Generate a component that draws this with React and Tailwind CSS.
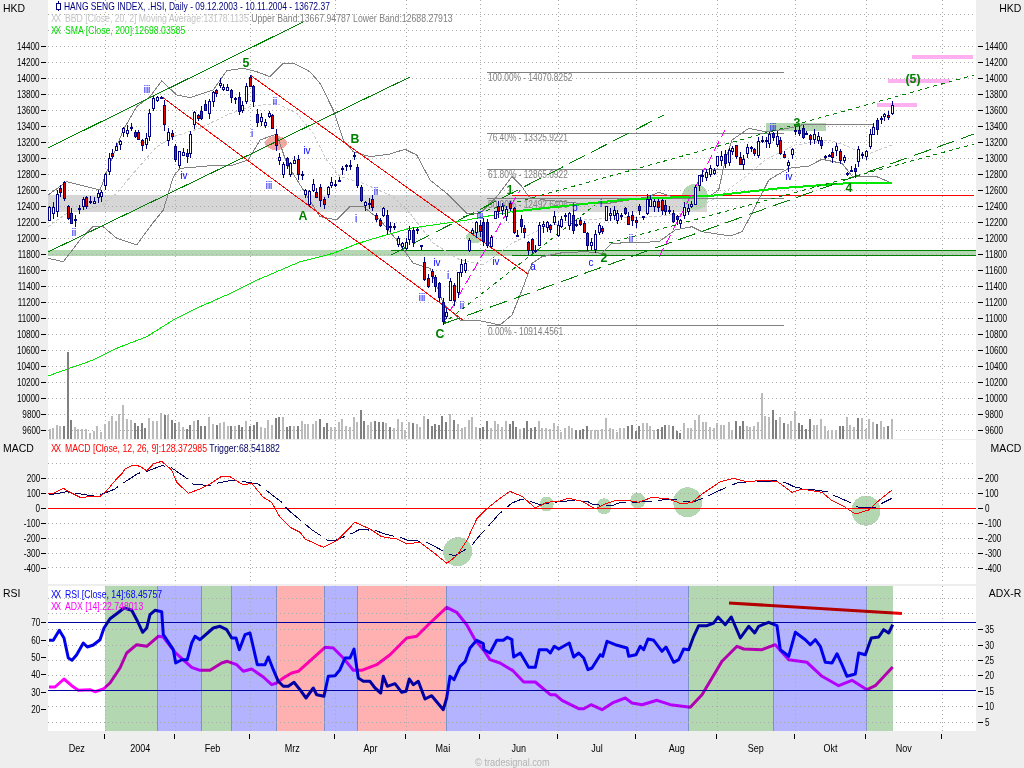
const C1 = [[148,622,660,0],[160,622,640,0],[172,583,635,0],[181,565,578,1],[193,548,595,1],[205,618,655,1],[214,640,670,1],[226,658,662,0],[238,625,628,0],[250,597,618,0],[259,592,618,1],[270,603,606,0],[283,604,610,0],[293,580,592,0],[304,577,590,0],[316,522,557,0],[328,475,515,0],[337,460,470,1],[349,438,450,0],[361,425,432,0],[370,385,397,0],[382,390,400,0],[394,382,385,0],[406,398,408,1],[415,397,418,1],[427,420,436,1],[439,415,432,0],[448,340,410,0],[460,296,325,0],[472,293,300,0],[484,292,293,0],[493,315,374,1],[505,396,422,0],[517,400,408,1],[526,438,478,1],[538,455,497,0],[550,458,465,0],[562,460,470,1],[571,402,460,0],[583,338,374,0],[595,345,355,1],[604,333,355,1],[616,313,330,1],[628,305,340,0],[640,278,305,0],[649,270,280,1],[661,250,255,0],[670,263,268,0],[682,262,270,0],[694,272,292,1],[706,295,297,0],[718,292,333,1],[727,316,330,0],[739,258,305,0],[751,232,258,1],[760,258,303,1],[772,342,367,1],[782,352,365,0],[796,367,375,0],[806,340,348,0],[817,346,385,1],[829,403,435,1],[838,472,480,0],[850,494,523,0],[862,476,497,1],[871,490,524,0],[883,482,490,0],[895,478,522,1],[907,522,524,0],[916,572,583,0],[928,573,612,0],[940,553,570,0],[949,576,592,1],[961,562,602,1],[973,597,612,1],[985,562,583,0],[994,547,555,0],[1006,553,555,0],[1018,541,543,0],[1027,505,507,0],[1039,495,497,0],[1051,495,497,0],[1063,467,470,0],[1072,502,557,1],[1084,562,602,1],[1096,607,615,0],[1108,610,611,0],[1117,597,622,1],[1129,647,658,1],[1141,660,675,1],[1150,625,647,0],[1162,645,687,1],[1171,678,681,1],[1183,678,679,0],[1195,715,733,0],[1207,730,740,0],[1219,728,746,0],[1228,690,718,0],[1240,690,727,1],[1252,688,690,0],[1264,737,740,0],[1273,787,838,1],[1285,835,860,1],[1297,815,830,1],[1306,832,860,1],[1318,850,893,1],[1330,908,965,1],[1339,937,950,0],[1351,843,900,0],[1363,855,900,1],[1375,818,878,0],[1384,792,818,0],[1396,790,810,0],[1408,722,750,0],[1417,690,700,0],[1429,667,697,0],[1441,675,695,1],[1450,667,725,1],[1462,667,735,1],[1474,712,738,0],[1486,635,655,0],[1495,618,635,1],[1507,620,630,0],[1519,627,650,0],[1531,610,625,1]];
const C2 = [[5,625,697,1],[16,705,706,0],[28,657,680,1],[37,685,698,1],[49,728,752,1],[61,718,750,1],[70,750,752,0],[82,677,735,0],[94,672,680,0],[106,668,682,0],[115,676,688,1],[127,648,667,0],[139,675,705,0],[148,657,680,0],[160,645,646,0],[172,640,675,0],[184,645,690,1],[193,672,673,0],[205,660,672,1],[217,670,697,1],[226,700,735,1],[238,728,735,0],[250,703,748,0],[262,677,697,0],[271,685,695,1],[283,620,660,0],[295,640,645,0],[307,630,645,0],[316,640,660,0],[328,645,650,0],[340,625,640,1],[349,650,672,1],[361,645,660,1],[373,660,668,1],[382,618,632,1],[394,650,651,0],[406,597,640,0],[415,598,618,0],[427,605,618,0],[439,603,622,1],[451,600,632,1],[460,615,635,1],[472,630,635,0],[484,640,665,1],[496,650,657,1],[505,660,670,0],[517,622,645,0],[529,625,635,0],[538,613,618,0],[550,562,612,0],[562,527,555,0],[571,525,530,0],[583,518,532,0],[595,505,522,0],[607,510,520,0],[616,470,497,0],[628,468,480,0],[640,462,490,1],[652,452,487,0],[661,445,455,0],[673,437,470,1],[685,472,492,1],[694,477,493,0],[706,442,460,0],[718,443,444,0],[727,447,460,1],[739,425,467,0],[751,420,425,0],[763,420,425,0],[772,402,430,0],[784,400,412,1],[796,408,432,0],[805,422,460,1],[817,462,472,1],[829,487,497,0],[841,447,463,0],[850,392,393,0],[862,390,400,1],[874,385,412,1],[883,400,401,0],[895,405,418,1],[907,402,418,0],[919,408,420,0],[928,420,437,1],[940,470,471,0],[952,465,466,0],[961,458,472,1],[973,440,452,0],[985,455,480,1],[997,472,480,0],[1006,520,521,0],[1018,512,513,0],[1030,504,515,1],[1039,447,485,0],[1051,463,464,0],[1063,453,470,0],[1075,403,440,0],[1084,382,402,0],[1096,362,388,1],[1108,355,356,0],[1117,343,350,0],[1129,347,352,1],[1141,316,340,0]];
const candles = [...C1.map(([x,t,b,r])=>[Math.round(x/3)+.5,t/3,b/3,r]), ...C2.map(([x,t,b,r])=>[Math.round(512+x/3)+.5,t/3,b/3,r])];
const V1 = [147,135,157,132,168,124,178,127,188,127,200,-96,210,108,221,130,232,135,243,135,254,135,266,148,278,140,289,127,300,145,312,120,323,112,333,97,344,112,354,90,365,63,378,105,390,108,402,118,410,125,423,118,433,132,445,103,456,110,467,110,480,87,492,92,501,92,513,108,522,118,534,114,546,130,558,135,568,124,580,110,591,108,600,125,612,125,623,98,635,120,647,122,657,118,668,113,680,125,690,125,702,126,714,124,724,130,736,112,747,125,759,122,769,115,780,130,792,132,802,107,813,122,824,103,835,98,846,99,858,130,868,125,878,125,890,125,902,112,912,120,922,120,936,120,945,110,957,105,968,130,979,118,990,130,1002,130,1014,113,1022,106,1034,126,1046,130,1058,100,1067,113,1080,78,1090,112,1102,122,1111,115,1122,112,1134,113,1146,115,1156,116,1168,130,1180,132,1192,105,1204,113,1213,138,1224,113,1235,118,1247,120,1258,128,1270,97,1282,106,1292,127,1302,120,1314,122,1324,97,1335,115,1346,90,1358,108,1370,120,1382,132,1392,130,1404,108,1414,100,1425,130,1437,132,1447,130,1459,112,1470,132,1482,112,1492,120,1504,128,1514,112,1526,120];
const V2 = [0,112,10,130,20,135,32,132,43,110,55,132,66,128,77,110,88,133,100,132,111,136,123,117,135,127,143,145,155,132,167,127,178,133,190,137,200,138,211,135,223,127,233,138,245,138,256,138,267,135,278,102,290,133,300,135,312,143,322,133,333,132,345,127,357,123,368,140,378,127,390,118,402,118,412,127,424,138,435,135,447,128,456,123,468,123,480,125,491,142,500,147,512,118,524,133,534,133,546,108,557,92,569,113,579,113,590,130,602,133,612,118,623,122,634,122,647,115,657,138,669,110,680,125,690,112,701,125,712,130,723,127,735,115,746,27,757,95,768,100,780,78,790,108,800,100,812,118,824,120,835,110,846,82,857,118,868,124,880,135,890,105,902,123,913,123,924,106,935,127,946,140,957,138,968,137,980,127,990,125,1002,100,1012,123,1024,130,1034,102,1046,102,1058,135,1069,105,1080,113,1092,120,1103,112,1114,128,1125,127,1136,106];
const vols = [];
const addV = (a, ox) => { for (let i = 0; i < a.length; i += 2) { const x = Math.round(ox + a[i] / 3); let best = candles[0]; for (const c of candles) if (Math.abs(c[0] - x) < Math.abs(best[0] - x)) best = c; vols.push([x, 384 + a[i + 1] / 3, best[3]]); } };
addV(V1, 0); addV(V2, 512);
const pts = (a, ox = 0, oy = 0) => { let s = []; for (let i = 0; i < a.length; i += 2) s.push(`${(ox + a[i] / 3).toFixed(1)},${(oy + a[i + 1] / 3).toFixed(1)}`); return s.join(' '); };
const both = (a, b, oy = 0) => pts(a, 0, oy) + ' ' + pts(b, 512, oy);

const SMA = pts([144,1128,200,1108,280,1080,350,1045,440,1010,520,960,600,920,680,885,760,845,830,815,900,785,960,770,1000,760,1075,730,1140,710,1230,685,1320,672,1400,660,1536,635]);
const SMA2 = pts([0,635,120,622,350,598,590,588,620,585,800,565,1000,550,1140,550], 512);
const UP = both([144,585,200,545,260,560,300,570,330,490,370,390,410,320,450,290,485,243,530,285,570,293,640,270,680,212,730,205,770,215,810,230,850,190,880,190,930,215,960,250,1000,330,1030,420,1060,455,1110,470,1170,462,1215,448,1250,465,1290,540,1340,580,1400,640,1440,640,1490,590,1536,530],[30,560,50,590,100,600,200,610,290,610,410,590,440,577,480,590,590,590,620,570,640,480,660,420,710,385,760,395,800,390,850,380,880,372,1085,372]);
const LOW = both([144,775,190,785,240,720,280,678,310,680,350,715,410,735,450,680,490,630,520,530,540,505,600,500,650,495,700,495,745,480,780,420,830,402,860,490,910,570,960,650,1010,660,1050,620,1090,620,1140,660,1190,720,1240,790,1290,805,1330,910,1380,960,1430,960,1500,975,1536,945],[30,870,60,790,90,770,150,758,220,755,270,760,300,730,440,725,490,690,540,680,570,695,655,708,690,695,720,640,740,600,770,540,830,505,890,498,930,478,990,490,1020,528,1090,528,1140,550]);
const MID = both([144,680,200,640,300,620,350,580,400,520,470,440,520,410,600,385,680,345,750,320,830,310,890,340,940,400,980,480,1020,530,1090,550,1180,590,1230,640,1300,730,1380,780,1450,795,1536,730],[100,680,200,660,300,655,430,650,520,640,620,590,700,530,760,480,850,435,950,420,1010,440,1060,465,1140,435]);
const MACD = both([144,328,160,328,190,313,210,325,240,340,300,337,320,320,345,290,365,270,375,255,400,243,420,247,440,260,460,240,485,232,515,258,530,295,565,328,600,315,630,300,665,277,690,278,730,303,755,298,790,340,815,355,840,400,870,430,900,445,915,465,970,490,1010,470,1065,415,1110,435,1145,458,1190,465,1220,480,1260,475,1300,505,1340,538,1370,515,1400,470,1430,405,1460,375,1490,350,1530,322],[0,325,30,337,70,372,105,355,140,352,170,343,210,352,250,375,280,360,310,350,340,348,380,355,420,340,470,345,510,360,540,355,570,330,600,310,625,293,665,283,700,292,760,290,795,292,840,325,870,315,930,325,960,350,1000,370,1030,390,1070,378,1100,350,1140,318],384);
const TRIG = both([147,333,200,323,260,333,300,333,345,315,365,300,415,268,440,262,485,245,510,248,560,283,580,300,630,305,655,297,700,288,775,300,795,316,845,355,865,378,915,420,935,437,985,470,1005,470,1058,447,1080,436,1130,440,1150,449,1205,462,1222,468,1275,473,1295,482,1345,510,1365,515,1415,485,1432,463,1478,412,1495,392,1536,357],[30,345,85,362,105,358,150,352,180,350,225,352,245,362,300,365,320,357,400,353,480,345,515,352,540,355,585,338,610,325,660,303,680,295,800,290,825,298,850,310,945,323,968,335,1020,358,1040,370,1090,372,1110,358,1140,343],384);
const RSI = both([147,772,160,772,178,742,192,765,205,825,216,832,230,815,250,780,262,792,280,786,300,770,312,735,330,707,350,692,372,675,395,682,410,710,428,748,440,735,450,695,465,682,485,686,490,755,520,800,527,840,545,830,562,830,575,780,585,760,600,770,640,735,660,730,680,740,695,765,708,765,718,800,735,755,750,750,772,845,795,845,805,822,820,860,835,895,850,910,865,910,882,898,900,920,918,945,940,915,950,935,972,940,985,880,1005,878,1020,860,1035,825,1050,825,1062,798,1075,885,1090,895,1110,895,1125,915,1142,930,1150,880,1162,910,1185,902,1205,928,1218,925,1228,888,1240,905,1255,895,1275,948,1295,938,1330,980,1340,945,1350,880,1362,890,1380,850,1396,835,1410,795,1430,772,1450,782,1452,800,1470,810,1490,772,1510,772,1522,763,1536,770],[0,780,5,822,25,810,50,853,70,853,82,800,105,800,115,810,127,790,140,798,172,780,185,822,200,810,215,825,228,860,240,855,265,815,272,820,285,775,310,785,345,795,350,820,372,815,385,790,395,800,408,768,425,772,450,805,462,792,485,838,500,830,515,798,530,800,545,760,560,728,585,728,605,720,618,702,640,725,658,702,685,765,710,730,728,750,740,730,770,718,795,728,805,800,830,820,850,748,880,770,895,785,910,770,925,790,940,838,960,840,975,812,990,845,1005,880,1030,873,1040,810,1060,815,1078,765,1100,762,1115,740,1130,750,1142,725],384);
const ADX = both([147,912,165,912,192,888,215,908,235,922,270,920,285,926,310,918,330,900,360,855,380,810,410,785,440,790,475,760,490,762,525,808,575,853,600,862,630,862,665,840,682,835,710,845,730,865,755,858,790,882,815,905,830,900,850,885,875,870,895,865,975,793,1000,795,1030,825,1060,862,1085,862,1130,845,1170,815,1220,765,1250,760,1290,720,1340,673,1370,688,1400,725,1425,770,1450,800,1470,830,1500,840,1536,862],[0,860,35,897,70,897,115,935,130,935,150,952,200,977,215,977,237,965,270,980,305,958,340,945,360,960,390,965,435,952,475,965,535,973,570,935,600,885,630,835,675,790,695,798,750,800,790,785,830,830,885,838,930,880,980,908,1020,892,1065,920,1090,908,1142,852],384);

const VX = [105.5,175.5,250.5,335.5,406.5,480.5,558.5,636.5,717.5,795.5,866.5,942.5];
const MONTHS = [['Dez','w-[57px]'],['2004','w-[70px]'],['Feb','w-[75px]'],['Mrz','w-[85px]'],['Apr','w-[71px]'],['Mai','w-[74px]'],['Jun','w-[78px]'],['Jul','w-[78px]'],['Aug','w-[81px]'],['Sep','w-[78px]'],['Okt','w-[71px]'],['Nov','w-[76px]']];
const BANDS = [[105,157,'#b3d7b0'],[157,201.7,'#b3b3ff'],[201.7,231.7,'#b3d7b0'],[231.7,276.7,'#b3b3ff'],[276.7,324.3,'#ffb0b0'],[324.3,357.7,'#b3b3ff'],[357.7,446.3,'#ffb0b0'],[446.3,688.7,'#b3b3ff'],[688.7,773.3,'#b3d7b0'],[773.3,866.3,'#b3b3ff'],[866.3,893,'#b3d7b0']];
const WAVE = [['5',246,67],['B',355,143],['A',303,220],['C',440,338],['1',510,194],['2',604,262],['3',797,127],['4',849,192],['(5)',913,83]];
const SUB = [['iii',147,93],['ii',74,236],['iv',184,179],['ii',275,105],['i',252,137],['iii',269,189],['iv',307,154],['ii',376,195],['i',356,222],['iv',437,266],['i',448,279],['iii',422,301],['ii',462,309],['iii',480,219],['iv',496,265],['a',533,270],['c',591,266],['b',575,211],['i',601,207],['ii',631,242],['iii',773,131],['iv',789,180]];
const FIB = [[72,'100.00% - 14070.8252',81],[133,'76.40% - 13325.9221',141],[169,'61.80% - 12865.0922',178],[198.5,'50.00% - 12492.6406',208],[325.5,'0.00% - 10914.4561',335]];

const T = ({ x, y, s = 0.75, anchor = 'middle', children, ...p }) => (
  <text transform={`translate(${x} ${y}) scale(${s} 1)`} textAnchor={anchor} {...p}>{children}</text>
);
const Dots = ({ ys, y1, y2 }) => (
  <g stroke="#aaaaaa" strokeDasharray="1 3">
    {ys.map(y => <line key={y} x1="48" x2="976" y1={y} y2={y} />)}
    {VX.map(x => <line key={x} x1={x} x2={x} y1={y1} y2={y2} />)}
  </g>
);
const Line = ({ a, b, c, d, ...p }) => <line x1={a} y1={b} x2={c} y2={d} {...p} />;

function LeftAxis({ labels, pad, row, title, titleTop }) {
  return (
    <div className="relative w-12 shrink-0 bg-[#eeeeee]" >
      <div className={titleTop + ' absolute left-[3px] text-[11px] leading-none scale-x-[.95] origin-left'}>{title}</div>
      <div className={pad + ' flex flex-col'}>
        {labels.map(l => (
          <div key={l} className={row + ' flex items-center justify-end'}>
            <span className="text-[11px] leading-none scale-x-[.74] origin-right">{l}</span>
            <span className="ml-[1px] mr-[2px] h-px w-[5px] bg-black" />
          </div>
        ))}
      </div>
    </div>
  );
}
function RightAxis({ labels, pad, row, title, titleTop }) {
  return (
    <div className="relative w-12 shrink-0 bg-[#eeeeee]">
      <div className={titleTop + ' absolute right-[3px] text-[11px] leading-none scale-x-[.95] origin-right'}>{title}</div>
      <div className={pad + ' flex flex-col'}>
        {labels.map(l => (
          <div key={l} className={row + ' flex items-center'}>
            <span className="ml-[2px] mr-[2px] h-px w-[5px] bg-black" />
            <span className="text-[11px] leading-none scale-x-[.74] origin-left">{l}</span>
          </div>
        ))}
      </div>
    </div>
  );
}
const Xs = () => <span className="tracking-[-2px] mr-[7px]">XX</span>;

function Main() {
  const prices = [14400,14200,14000,13800,13600,13400,13200,13000,12800,12600,12400,12200,12000,11800,11600,11400,11200,11000,10800,10600,10400,10200,10000,9800,9600];
  const gy = [14.5,30.5,...prices.map((_, i) => 46.5 + i * 16)];
  return (
    <div className="flex h-[439px]">
      <LeftAxis labels={prices} pad="pt-[38px]" row="h-4" title="HKD" titleTop="top-[3px]" />
      <div className="relative w-[928px] bg-white">
        <svg viewBox="48 0 928 439" className="block h-[439px] w-[928px]" shapeRendering="crispEdges">
          <rect x="48" y="195" width="659" height="17" fill="#d6d6d6" />
          <rect x="48" y="250" width="928" height="6" fill="#b3d7b0" />
          <rect x="766" y="123" width="60" height="8" fill="#b3d7b0" />
          <ellipse cx="695" cy="197" rx="13" ry="13" fill="#b3d7b0" />
          <ellipse cx="475" cy="237" rx="9" ry="6" fill="#b3d7b0" />
          <ellipse cx="276" cy="143" rx="11" ry="7" fill="#f5a8a0" />
          <Dots ys={gy} y1="0" y2="439" />
          <rect x="912" y="55" width="61" height="4" fill="#ffb0f0" />
          <rect x="888" y="79" width="62" height="4" fill="#ffb0f0" />
          <rect x="877" y="103" width="40" height="4" fill="#ffb0f0" />
          {FIB.map(([y, t, ty]) => (
            <g key={y}>
              <Line a="487" b={y} c="784" d={y} stroke="#808080" />
              <T x="488" y={ty} anchor="start" fontSize="11" fill="#808080" s="0.76">{t}</T>
            </g>
          ))}
          <Line a="391" b="250.5" c="976" d="250.5" stroke="#008000" strokeWidth="1" />
          <Line a="512" b="255.5" c="976" d="255.5" stroke="#008000" />
          <Line a="512" b="195.5" c="974" d="195.5" stroke="#ff0000" />
          <polyline points={MID} fill="none" stroke="#c8c8c8" strokeDasharray="3 2" />
          <polyline points={UP} fill="none" stroke="#808080" />
          <polyline points={LOW} fill="none" stroke="#808080" />
          <polyline points={SMA} fill="none" stroke="#00e800" />
          <polyline points={SMA2} fill="none" stroke="#00e800" strokeWidth="2" />
          <g stroke="#008000" fill="none">
            <Line a="48" b="148" c="303" d="22" />
            <Line a="48" b="252" c="410" d="77" />
            <Line a="443" b="324" c="974" d="134" strokeDasharray="18 7" />
            <Line a="391" b="255" c="664" d="115" strokeDasharray="18 7" />
            <Line a="463" b="217" c="974" d="75" strokeDasharray="4 4" />
            <Line a="609" b="243" c="974" d="144" strokeDasharray="4 4" />
            <Line a="443" b="324" c="595" d="205" strokeDasharray="4 4" />
          </g>
          <g stroke="#ff0000" fill="none">
            <Line a="250" b="75" c="528" d="274" />
            <Line a="162" b="97" c="463" d="320" />
          </g>
          <g stroke="#ff00ff" fill="none" strokeDasharray="10 5">
            <Line a="443" b="323" c="520" d="190" />
            <Line a="659" b="257" c="725" d="130" />
          </g>
          {vols.map(([x, top, r], i) => (
            <rect key={i} x={x} y={top} width="2" height={439 - top} fill={r ? '#808080' : '#bbbbbb'} />
          ))}
          {candles.map(([x, t, b, r], i) => {
            const wt = 1 + (i * 7919) % 5, wb = 1 + (i * 104729) % 6;
            return (
              <g key={i}>
                <line x1={x} x2={x} y1={t - wt} y2={b + wb} stroke="#000080" />
                <rect x={x - 1} y={t} width="2" height={Math.max(b - t, 1)} fill={r ? '#e00000' : '#ffffff'} stroke="#000080" />
              </g>
            );
          })}
          {WAVE.map(([t, x, y]) => <T key={t} x={x} y={y} fontSize="13" fontWeight="700" fill="#008000" s="0.95">{t}</T>)}
          {SUB.map(([t, x, y], i) => <T key={i} x={x} y={y} fontSize="11" fill="#0000ff" s="0.9">{t}</T>)}
        </svg>
        <div className="absolute left-[3px] top-0 text-[11px] leading-[12px]">
          <div className="flex h-3 items-center text-[#000080]">
            <svg width="14" height="10" className="shrink-0" shapeRendering="crispEdges"><line x1="7" x2="7" y1="0" y2="10" stroke="#000080" /><rect x="5" y="2" width="4" height="6" fill="#fff" stroke="#000080" /></svg>
            <span className="ml-[-1px] whitespace-nowrap scale-x-[.77] origin-left">HANG SENG INDEX, .HSI, Daily - 09.12.2003 - 10.11.2004 - 13672.37</span>
          </div>
          <div className="h-3 whitespace-nowrap scale-x-[.79] origin-left text-[#c4c4c4]"><Xs />BBD [Close, 20, 2] Moving Average:13178.1135 <span className="text-[#808080]">Upper Band:13667.94787 Lower Band:12688.27913</span></div>
          <div className="h-3 whitespace-nowrap scale-x-[.79] origin-left text-[#00e000]"><Xs />SMA [Close, 200]:12698.03585</div>
        </div>
      </div>
      <RightAxis labels={prices} pad="pt-[38px]" row="h-4" title="HKD" titleTop="top-[3px]" />
    </div>
  );
}

function MacdPanel() {
  const lab = [200,100,0,-100,-200,-300,-400];
  return (
    <div className="flex h-[144px]">
      <LeftAxis labels={lab} pad="pt-[31px]" row="h-[15px]" title="MACD" titleTop="top-[3px]" />
      <div className="relative w-[928px] bg-white">
        <svg viewBox="48 440 928 144" className="block h-[144px] w-[928px]" shapeRendering="crispEdges">
          {[[457.7,551.7,14.5,14.5],[546.7,504,7,7.5],[604,506.3,7.5,8],[637.7,500.7,7.5,8],[687.7,502.3,14.5,15],[866,510.7,14.5,15]].map(([x, y, a, b]) => (
            <ellipse key={x} cx={x} cy={y} rx={a} ry={b} fill="#b3d7b0" />
          ))}
          <Dots ys={[463.5,478.5,493.5,523.5,538.5,553.5,567.5]} y1="440" y2="584" />
          <Line a="48" b="508.5" c="976" d="508.5" stroke="#ff0000" strokeWidth="1" />
          <polyline points={TRIG} fill="none" stroke="#000060" strokeDasharray="20 6" />
          <polyline points={MACD} fill="none" stroke="#ff0000" />
        </svg>
        <div className="absolute left-[3px] top-[2px] whitespace-nowrap text-[11px] leading-[12px] scale-x-[.79] origin-left text-[#ff0000]"><Xs />MACD [Close, 12, 26, 9]:128.372985 <span className="text-[#000060]">Trigger:68.541882</span></div>
      </div>
      <RightAxis labels={lab} pad="pt-[31px]" row="h-[15px]" title="MACD" titleTop="top-[3px]" />
    </div>
  );
}

function RsiPanel() {
  return (
    <div className="flex h-[145px]">
      <LeftAxis labels={[70,60,50,40,30,20]} pad="pt-[28px]" row="h-[17.4px]" title="RSI" titleTop="top-[2px]" />
      <div className="relative w-[928px] bg-white">
        <svg viewBox="48 587 928 145" className="block h-[145px] w-[928px]" shapeRendering="crispEdges">
          {BANDS.map(([a, b, c]) => <rect key={a} x={a} y="587" width={b - a} height="145" fill={c} />)}
          {BANDS.slice(0, -1).map(([a, b]) => <line key={a} x1={Math.floor(b) + .5} x2={Math.floor(b) + .5} y1="587" y2="732" stroke="#8090c8" />)}
          <Dots ys={[599.5,614.5,630.5,646.5,661.5,676.5,707.5,723.5]} y1="587" y2="732" />
          <g stroke="#0000a0">
            <Line a="48" b="623.5" c="976" d="623.5" />
            <Line a="48" b="691.5" c="976" d="691.5" />
          </g>
          <g fill="none" strokeWidth="3" className="mix-blend-multiply" strokeLinejoin="round" shapeRendering="geometricPrecision">
            <polyline points={RSI} stroke="#0000ee" className="mix-blend-multiply" />
            <polyline points={ADX} stroke="#ff00ff" className="mix-blend-multiply" />
            <Line a="729" b="604" c="902" d="614.5" stroke="#ff0000" className="mix-blend-multiply" />
          </g>
        </svg>
        <div className="absolute left-[3px] top-[2px] whitespace-nowrap text-[11px] leading-[12px] scale-x-[.79] origin-left">
          <div className="text-[#0000ff]"><Xs />RSI [Close, 14]:68.45757</div>
          <div className="text-[#ff00ff]"><Xs />ADX [14]:22.748013</div>
        </div>
      </div>
      <RightAxis labels={[35,30,25,20,15,10,5]} pad="pt-[36px]" row="h-[15.4px]" title="ADX-R" titleTop="top-[2px]" />
    </div>
  );
}

export default function App() {
  return (
    <div className="flex h-[768px] w-[1024px] flex-col overflow-hidden bg-[#eeeeee] font-['Liberation_Sans',sans-serif] text-black">
      <Main />
      <div className="h-px" />
      <MacdPanel />
      <div className="h-[3px]" />
      <RsiPanel />
      <div className="flex pl-12">
        {MONTHS.map(([m, w]) => (
          <div key={m} className={w + ' relative flex h-[24px] items-end justify-center'}>
            <span className="text-[11px] leading-[14px] scale-x-[.82]">{m}</span>
            <span className="absolute right-0 top-[3px] h-[5px] w-px bg-black" />
          </div>
        ))}
      </div>
      <div className="flex justify-center pt-[1px]">
        <span className="text-[11px] leading-[12px] text-[#b4b4b4] scale-x-[.84]">© tradesignal.com</span>
      </div>
    </div>
  );
}
